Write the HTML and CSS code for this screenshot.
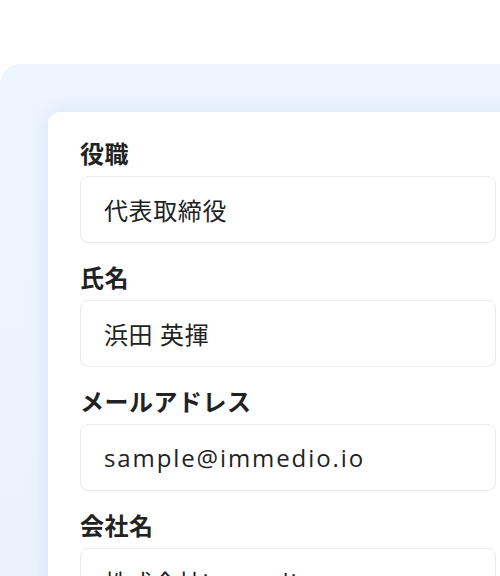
FILE: index.html
```html
<!DOCTYPE html>
<html lang="ja">
<head>
<meta charset="utf-8">
<link rel="stylesheet" href="styles.css">
</head>
<body>
<div class="panel">
  <div class="card">
    <div class="field">
      <div class="label">役職</div>
      <div class="input">代表取締役</div>
    </div>
    <div class="field">
      <div class="label">氏名</div>
      <div class="input">浜田 英揮</div>
    </div>
    <div class="field">
      <div class="label">メールアドレス</div>
      <div class="input"><span class="latin">sample@immedio.io</span></div>
    </div>
    <div class="field">
      <div class="label">会社名</div>
      <div class="input">株式会社<span class="latin">immedio</span></div>
    </div>
  </div>
</div>
</body>
</html>
```
FILE: styles.css
```css
html, body {
  margin: 0;
  padding: 0;
  background: #ffffff;
  overflow: hidden;
  width: 500px;
  height: 576px;
}
body {
  font-family: "Noto Sans CJK JP", "Noto Sans", sans-serif;
  color: #222222;
}
.panel {
  margin-top: 64px;
  width: 600px;
  height: 700px;
  border-top-left-radius: 20px;
  background: linear-gradient(180deg, #edf5fe 0%, #e9f2fd 100%);
  padding: 48px 0 0 48px;
  box-sizing: border-box;
}
.card {
  width: 500px;
  height: 700px;
  background: #ffffff;
  border-top-left-radius: 12px;
  box-shadow: 0 0 20px rgba(90, 120, 190, 0.14);
  padding: 26px 0 0 32px;
  box-sizing: border-box;
  display: flex;
  flex-direction: column;
  gap: 19px;
}
.field {
  display: flex;
  flex-direction: column;
  gap: 8px;
}
.label {
  font-size: 24px;
  font-weight: 700;
  line-height: 30px;
  letter-spacing: 0.5px;
  color: #222222;
}
.input {
  width: 416px;
  height: 67px;
  flex-shrink: 0;
  box-sizing: border-box;
  border: 1.5px solid #ebebeb;
  border-radius: 8px;
  padding-left: 23px;
  display: flex;
  align-items: center;
  font-family: "Open Sans", "Noto Sans CJK JP", sans-serif;
  font-size: 24px;
  letter-spacing: 0.6px;
  color: #222222;
  white-space: nowrap;
}
.latin {
  letter-spacing: 1.9px;
}
```
